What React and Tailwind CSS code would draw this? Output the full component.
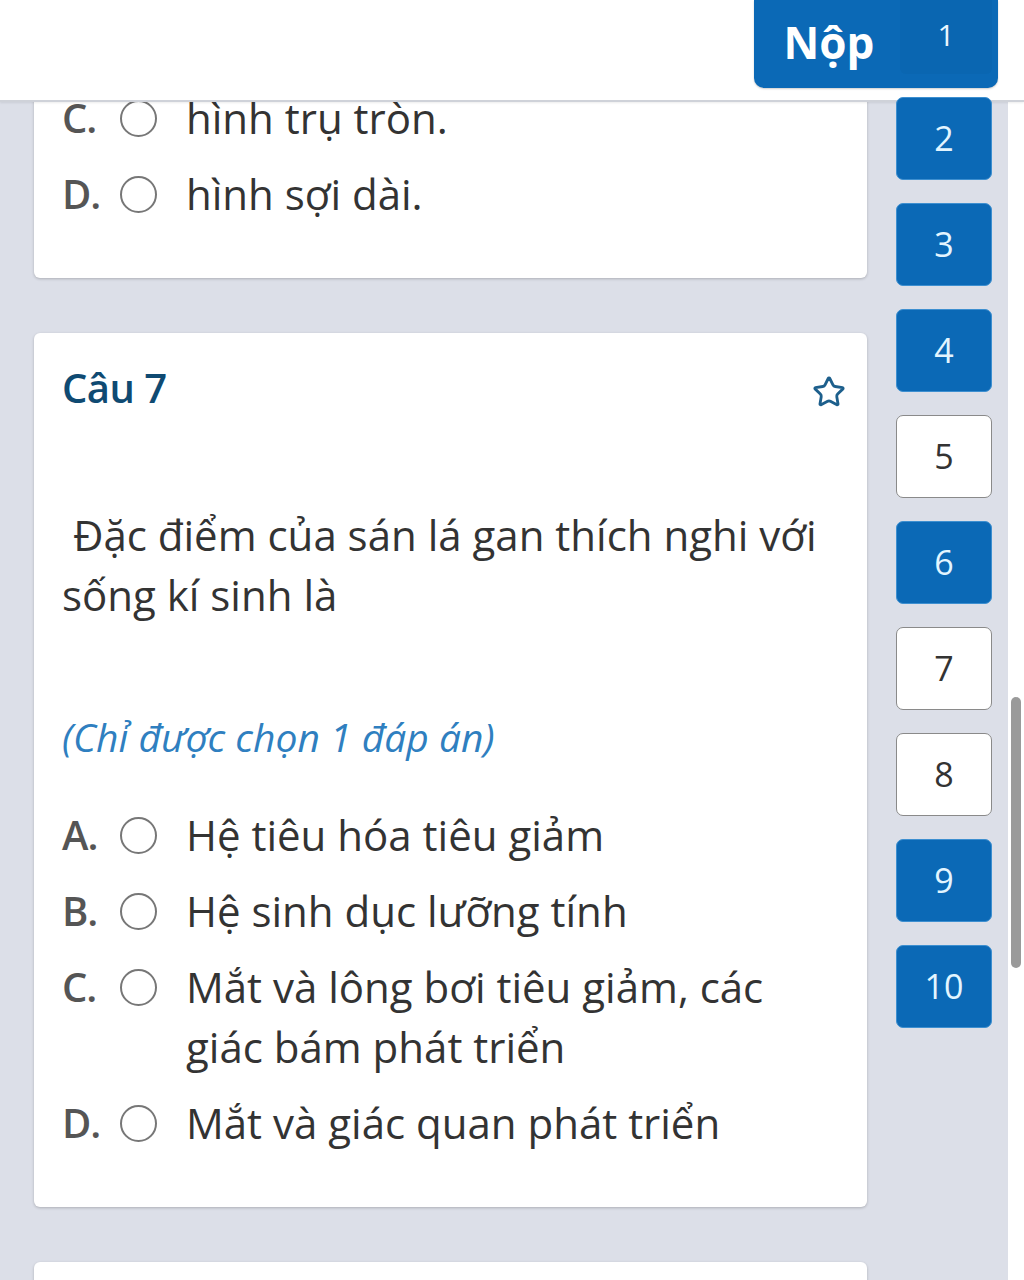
import { Star } from "lucide-react";

const font = { fontFamily: '"Open Sans", "Noto Sans", sans-serif' };

function Option({ label, text }) {
    return (
        <div className="flex items-start py-2">
            <span className="w-[58px] shrink-0 text-[40px] leading-[60px] font-semibold text-[#555] tracking-[-1px]">{label}</span>
            <span className="mt-[12px] w-[37px] h-[37px] shrink-0 rounded-full border-2 border-[#777] bg-white"></span>
            <span className="ml-[29px] max-w-[620px] text-[42px] leading-[60px] text-[#333]">{text}</span>
        </div>
    );
}

function NavButton({ n, active }) {
    return (
        <div
            className={
                active
                    ? "w-[96px] h-[83px] shrink-0 rounded-[7px] border border-[#3d8fd0] bg-[#0b69b6] flex items-center justify-center text-[34px] text-[#e3f5ff]"
                    : "w-[96px] h-[83px] shrink-0 rounded-[7px] border-[1.5px] border-[#8a8a8a] bg-white flex items-center justify-center text-[34px] text-[#333]"
            }
        >
            {n}
        </div>
    );
}

export default function App() {
    const nav = [
        [2, true], [3, true], [4, true], [5, false],
        [6, true], [7, false], [8, false], [9, true], [10, true],
    ];

    return (
        <div className="relative w-[1024px] h-[1280px] overflow-hidden bg-[#dcdfe8]" style={font}>
            {/* Header bar */}
            <div className="absolute top-0 left-0 z-10 w-full h-[102px] bg-white border-b-2 border-[#cfd2d9] shadow-[0_1px_2px_rgba(0,0,0,0.08)]"></div>

            {/* Submit button, question 1 sits under it */}
            <div className="absolute top-0 left-[754px] z-30 w-[244px] h-[88px] rounded-b-[10px] bg-[#0b69b6] flex items-center shadow-[0_1px_2px_rgba(0,0,0,0.2)]">
                <span className="w-[146px] pl-[4px] text-center text-[44px] font-bold text-white leading-none pb-[4px]">Nộp</span>
                <div className="w-[92px] h-[74px] self-start rounded-b-[6px] bg-[#0a66b1] flex items-center justify-center text-[30px] text-[#eaf6ff] pb-[6px]">
                    1
                </div>
            </div>

            <div className="flex">
                {/* Questions */}
                <div className="w-[867px] pl-[34px] flex flex-col gap-[55px] shrink-0">
                    <div className="bg-white rounded-[6px] shadow-[0_1px_3px_rgba(0,0,0,0.22)] pl-[28px] pr-[20px] pt-[80px] pb-[46px]">
                        <Option label="C." text="hình trụ tròn." />
                        <Option label="D." text="hình sợi dài." />
                    </div>

                    <div className="bg-white rounded-[6px] shadow-[0_1px_3px_rgba(0,0,0,0.22)] pl-[28px] pr-[20px] pt-[31px] pb-[46px]">
                        <div className="flex items-center justify-between">
                            <span className="text-[40px] leading-[48px] font-semibold text-[#0f4a72] tracking-[-0.5px]">Câu 7</span>
                            <Star size={34} strokeWidth={2} color="#1d5f8c" className="mt-[8px] mr-[1px]" />
                        </div>
                        <p className="mt-[93px] text-[42px] leading-[60px] text-[#333]">
                            {"\u00a0"}Đặc điểm của sán lá gan thích nghi với sống kí sinh là
                        </p>
                        <p className="mt-[87px] text-[39px] leading-[50px] italic text-[#2f7fc0]">(Chỉ được chọn 1 đáp án)</p>
                        <div className="mt-[35px]">
                            <Option label="A." text="Hệ tiêu hóa tiêu giảm" />
                            <Option label="B." text="Hệ sinh dục lưỡng tính" />
                            <Option label="C." text="Mắt và lông bơi tiêu giảm, các giác bám phát triển" />
                            <Option label="D." text="Mắt và giác quan phát triển" />
                        </div>
                    </div>

                    <div className="bg-white rounded-[6px] shadow-[0_1px_3px_rgba(0,0,0,0.22)] h-[300px] shrink-0"></div>
                </div>

                {/* Question navigator */}
                <div className="relative z-20 ml-[29px] mt-[97px] flex flex-col gap-[23px]">
                    {nav.map(([n, active]) => (
                        <NavButton key={n} n={n} active={active} />
                    ))}
                </div>

                {/* Scrollbar */}
                <div className="ml-[16px] w-[16px] h-[1280px] bg-white shrink-0 pt-[697px] flex justify-center">
                    <div className="w-[10px] h-[271px] rounded-full bg-[#9a9a9a]"></div>
                </div>
            </div>
        </div>
    );
}
